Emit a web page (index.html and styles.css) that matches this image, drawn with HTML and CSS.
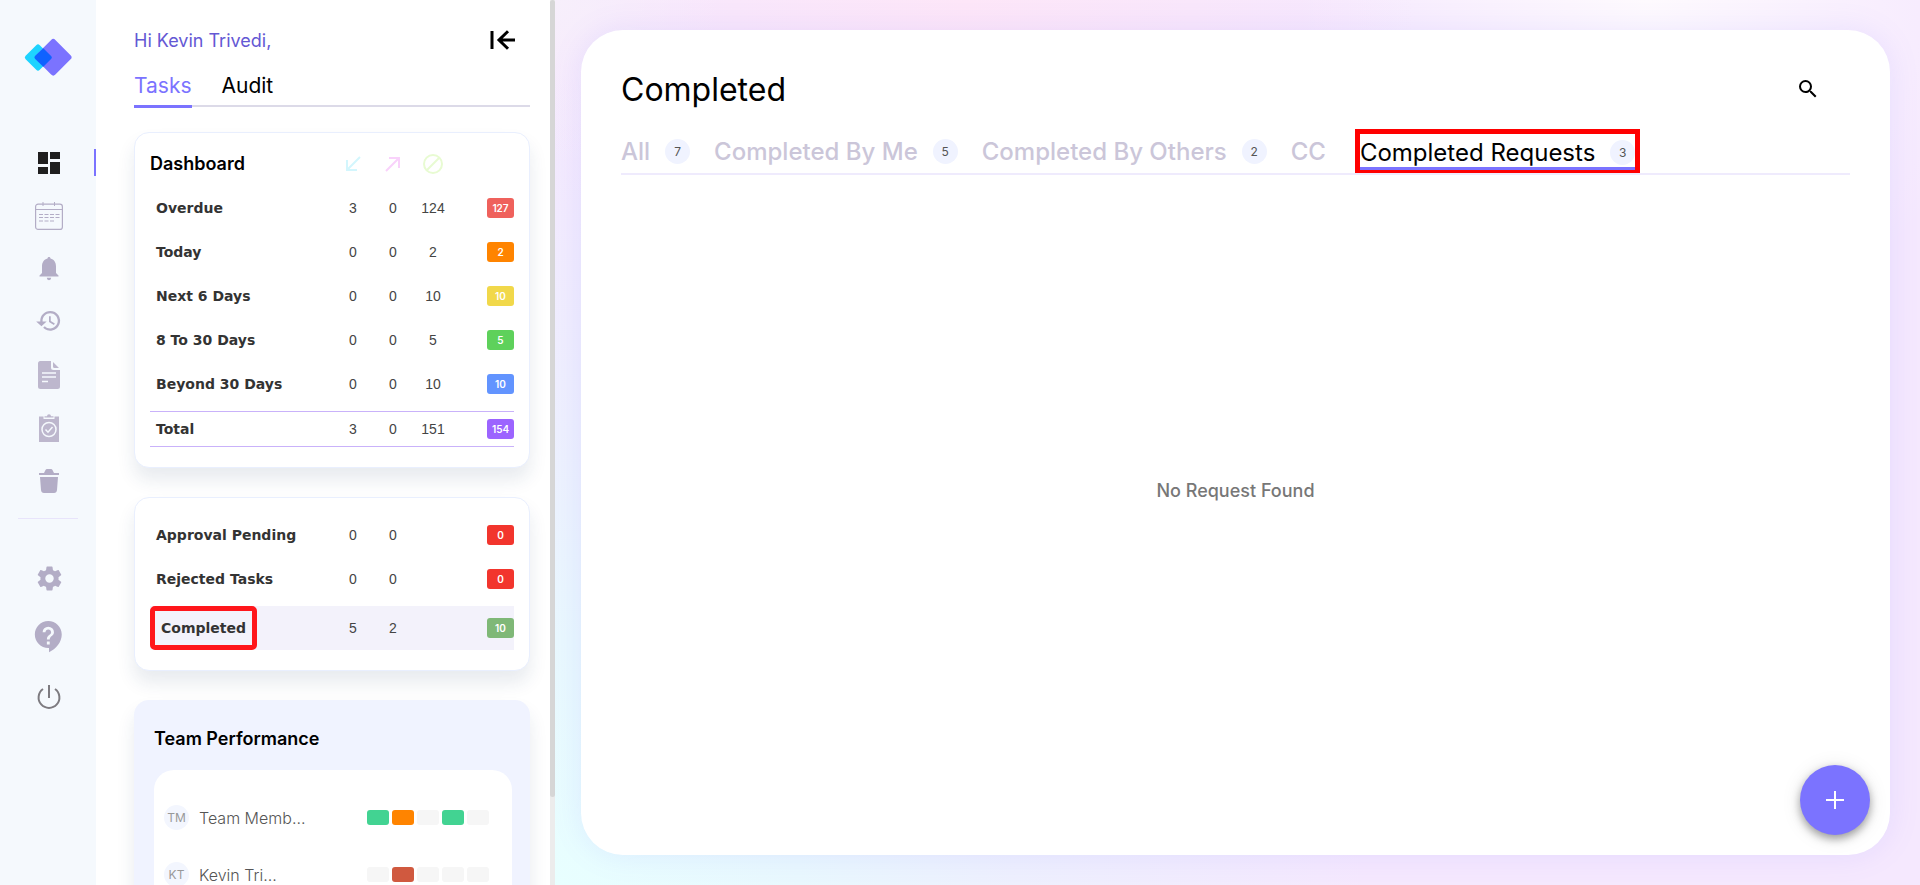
FILE: index.html
```html
<!DOCTYPE html>
<html lang="en">
<head>
<meta charset="utf-8">
<meta name="viewport" content="width=device-width, initial-scale=1">
<title>Completed Requests</title>
<link rel="stylesheet" href="styles.css">
</head>
<body>
<div class="app">
  <nav class="rail" aria-label="Main">
    <a class="logo" href="#" aria-label="Home">
      <svg width="50" height="40" viewBox="0 0 50 40">
        <rect x="5" y="10.500" width="20" height="20" rx="2.500" transform="rotate(45 15 20.500)" fill="#1dd3ff"/>
        <rect x="16.500" y="6.500" width="27.500" height="27.500" rx="3" transform="rotate(45 30.250 20.250)" fill="#7b73ff"/>
        <path d="M20.300 11.300 L28.300 19.200 Q29.500 20.500 28.300 21.800 L20.300 29.700 L12 21.700 Q10.800 20.300 12 19 Z" fill="#0f62ff"/>
      </svg>
    </a>
    <div class="rail-group">
      <button class="rail-btn active" aria-label="Dashboard"><svg width="22" height="22" viewBox="0 0 22 22" fill="#1f1f1f"><path d="M0 0h10v12H0zM0 15h10v7H0zM12 0h10v7H12zM12 10h10v12H12z"/></svg></button>
      <button class="rail-btn" aria-label="Calendar"><svg width="28" height="28" viewBox="0 0 28 28" fill="none" stroke="#b3adc6"><rect x=".6" y="2.200" width="26.800" height="25.200" rx="2.500" stroke-width="1.200"/><path d="M.6 7.500h26.800M8 0v4M19.500 0v4"/><path d="M4 12.500h20.500M4 15.500h20.500M4 19h15.500" stroke-dasharray="4 1.500"/></svg></button>
      <button class="rail-btn" aria-label="Notifications"><svg width="20" height="24" viewBox="0 0 20 24" fill="#b3adc6"><path d="M10 0c.9 0 1.500.7 1.500 1.600C15 2.500 17 5.500 17 9.500v6.500l2.500 2.500v1H.5v-1L3 16V9.500C3 5.500 5 2.500 8.500 1.600 8.500.7 9.100 0 10 0zM7.800 20.800h4.400a2.200 2.400 0 0 1-4.400 0z"/></svg></button>
      <button class="rail-btn" aria-label="History"><svg width="28" height="28" viewBox="0.500 0.500 24 24" fill="#b3adc6"><path d="M13.500 3C8.800 3 5 6.800 5 11.500V12H1.500l4.500 4.200 4.500-4.200H7v-.5C7 7.900 9.900 5 13.500 5s6.500 2.900 6.500 6.500-2.900 6.500-6.500 6.500c-1.800 0-3.400-.7-4.600-1.900l-1.400 1.400A8.500 8.500 0 1 0 13.500 3zM12.500 7.500v5l4.200 2.500.8-1.200-3.500-2.100V7.500z"/></svg></button>
      <button class="rail-btn" aria-label="Documents"><svg width="22" height="28" viewBox="0 0 22 28"><path d="M3 0h10v6.500A2.500 2.500 0 0 0 15.500 9H22v16.500a2.500 2.500 0 0 1-2.500 2.500h-17A2.500 2.500 0 0 1 0 25.500v-23A2.500 2.500 0 0 1 3 0zM15 1l6 6h-4.500A1.500 1.500 0 0 1 15 5.500z" fill="#bdb7cd"/><path d="M4 12h14M4 16h14M4 20.500h6" stroke="#f5f9fd" stroke-width="1.500"/></svg></button>
      <button class="rail-btn" aria-label="Approvals"><svg width="20" height="28" viewBox="0 0 20 28"><path d="M0 2.500h4.500V5h11V2.500H20V28H0z" fill="#bdb7cd"/><path d="M5.500 3.500V2.300H8a2 2 0 0 1 4 0h2.500v1.200z" fill="#bdb7cd"/><circle cx="10" cy="15.500" r="7" fill="none" stroke="#f5f9fd" stroke-width="1.500"/><path d="m6.500 15.500 2.500 2.700 4.500-5.200" fill="none" stroke="#f5f9fd" stroke-width="1.500"/></svg></button>
      <button class="rail-btn" aria-label="Trash"><svg width="20" height="24" viewBox="0 0 20 24" fill="#b3adc6"><path d="M0 4h5l1.500-3Q7 0 8 0h4q1 0 1.500 1L15 4h5v2H0zM1 8h18l-1 13q-.3 3-3 3H5q-2.700 0-3-3z"/></svg></button>
    </div>
    <hr class="rail-rule">
    <div class="rail-group rail-group-low">
      <button class="rail-btn" aria-label="Settings"><svg width="29" height="29" viewBox="0 0 24 24" fill="#b3adc6"><path d="M19.430 12.980c.04-.32.07-.64.07-.98s-.03-.66-.07-.98l2.110-1.650c.19-.15.24-.42.12-.64l-2-3.460c-.12-.22-.39-.3-.61-.22l-2.490 1c-.52-.4-1.080-.73-1.690-.98l-.38-2.650C14.460 2.180 14.250 2 14 2h-4c-.25 0-.46.18-.49.42l-.38 2.650c-.61.25-1.170.59-1.690.98l-2.490-1c-.23-.09-.49 0-.61.22l-2 3.460c-.13.22-.07.49.12.64l2.110 1.650c-.04.32-.07.65-.07.98s.03.66.07.98l-2.110 1.650c-.19.15-.24.42-.12.64l2 3.460c.12.22.39.3.61.22l2.490-1c.52.4 1.080.73 1.690.98l.38 2.650c.03.24.24.42.49.42h4c.25 0 .46-.18.49-.42l.38-2.650c.61-.25 1.170-.59 1.690-.98l2.490 1c.23.09.49 0 .61-.22l2-3.460c.12-.22.07-.49-.12-.64zM12 15.500a3.500 3.500 0 1 1 0-7 3.500 3.500 0 0 1 0 7z"/></svg></button>
      <button class="rail-btn" aria-label="Help"><svg width="34" height="34" viewBox="0 2 24 24" fill="#b3adc6"><path d="M11.500 2C6.260 2 2 6.260 2 11.500S6.260 21 11.500 21h.5v3c4.860-2.340 9-7 9-12.500C21 6.260 16.740 2 11.500 2zm1 16.500h-2v-2h2zm0-3.500h-2c0-3.250 3-3 3-5 0-1.100-.9-2-2-2s-2 .9-2 2h-2a4 4 0 0 1 8 0c0 2.500-3 2.750-3 5z"/></svg></button>
      <button class="rail-btn" aria-label="Log out"><svg width="24" height="24" viewBox="0 0 24 24" fill="none" stroke="#7d7b80" stroke-width="2"><path d="M12 0v13M6 4a10.400 10.400 0 1 0 12 0"/></svg></button>
    </div>
  </nav>

  <aside class="panel">
    <header class="panel-head">
      <p class="greeting">Hi Kevin Trivedi,</p>
      <button class="collapse" aria-label="Collapse panel"><svg width="26" height="20" viewBox="0 0 26 20" fill="none" stroke="#000" stroke-width="3"><path d="M3 1v18M26 10H10M19 1.200 10 10l9 8.800"/></svg></button>
    </header>
    <div class="panel-tabs">
      <button class="panel-tab current">Tasks</button>
      <button class="panel-tab">Audit</button>
    </div>

    <section class="card">
      <table class="stats">
        <thead>
          <tr>
            <th class="stats-title" scope="col">Dashboard</th>
            <th scope="col" aria-label="Incoming"><svg width="16" height="16" viewBox="0 0 16 16" fill="none" stroke="#d3f6fd" stroke-width="2"><path d="M15 1 2 14M2 4v10h10"/></svg></th>
            <th scope="col" aria-label="Outgoing"><svg width="16" height="16" viewBox="0 0 16 16" fill="none" stroke="#f9d2fb" stroke-width="2"><path d="M1 15 14 2M4 2h10v10"/></svg></th>
            <th scope="col" aria-label="Other"><svg width="20" height="20" viewBox="0 0 20 20" fill="none" stroke="#e8fbd2" stroke-width="2"><circle cx="10" cy="10" r="9"/><path d="M4 16 16 4"/></svg></th>
            <td></td>
          </tr>
        </thead>
        <tbody>
          <tr><th scope="row">Overdue</th><td>3</td><td>0</td><td>124</td><td><span class="badge red">127</span></td></tr>
          <tr><th scope="row">Today</th><td>0</td><td>0</td><td>2</td><td><span class="badge orange">2</span></td></tr>
          <tr><th scope="row">Next 6 Days</th><td>0</td><td>0</td><td>10</td><td><span class="badge yellow">10</span></td></tr>
          <tr><th scope="row">8 To 30 Days</th><td>0</td><td>0</td><td>5</td><td><span class="badge green">5</span></td></tr>
          <tr><th scope="row">Beyond 30 Days</th><td>0</td><td>0</td><td>10</td><td><span class="badge blue">10</span></td></tr>
        </tbody>
        <tfoot>
          <tr><th scope="row">Total</th><td>3</td><td>0</td><td>151</td><td><span class="badge purple">154</span></td></tr>
        </tfoot>
      </table>
    </section>

    <section class="card card-short">
      <table class="stats">
        <tbody>
          <tr><th scope="row">Approval Pending</th><td>0</td><td>0</td><td></td><td><span class="badge scarlet">0</span></td></tr>
          <tr><th scope="row">Rejected Tasks</th><td>0</td><td>0</td><td></td><td><span class="badge scarlet">0</span></td></tr>
        </tbody>
        <tbody>
          <tr class="selected"><th scope="row"><span class="marked">Completed</span></th><td>5</td><td>2</td><td></td><td><span class="badge sage">10</span></td></tr>
        </tbody>
      </table>
    </section>

    <section class="team">
      <h2 class="team-title">Team Performance</h2>
      <ul class="team-list">
        <li class="member"><span class="avatar">TM</span><span class="name">Team Memb...</span><span class="bars"><i class="bar up"></i><i class="bar warn"></i><i class="bar"></i><i class="bar up"></i><i class="bar"></i></span></li>
        <li class="member"><span class="avatar">KT</span><span class="name">Kevin Tri...</span><span class="bars"><i class="bar"></i><i class="bar down"></i><i class="bar"></i><i class="bar"></i><i class="bar"></i></span></li>
      </ul>
    </section>
  </aside>
  <div class="track"><div class="thumb"></div></div>

  <main class="stage">
    <section class="sheet">
      <header class="sheet-head">
        <h1 class="title">Completed</h1>
        <button class="search" aria-label="Search"><svg width="24" height="24" viewBox="0 0 24 24"><path d="M15.500 14h-.79l-.28-.27A6.470 6.470 0 0 0 16 9.500 6.500 6.500 0 1 0 9.500 16c1.610 0 3.090-.59 4.230-1.570l.27.28v.79l5 4.990L20.490 19zm-6 0C7.010 14 5 11.990 5 9.500S7.010 5 9.500 5 14 7.010 14 9.500 11.990 14 9.500 14z"/></svg></button>
      </header>
      <div class="tabs">
        <button class="tab">All <span class="count">7</span></button>
        <button class="tab">Completed By Me <span class="count">5</span></button>
        <button class="tab">Completed By Others <span class="count">2</span></button>
        <button class="tab">CC</button>
        <button class="tab chosen">Completed Requests <span class="count">3</span></button>
      </div>
      <p class="empty">No Request Found</p>
      <button class="fab" aria-label="Add"><svg width="18" height="18" viewBox="0 0 18 18" stroke="#fff" stroke-width="2"><path d="M9 0v18M0 9h18"/></svg></button>
    </section>
  </main>
</div>
</body>
</html>
```
FILE: styles.css
```css
* { box-sizing: border-box; }
body, p, h1, h2, ul { margin: 0; padding: 0; }
body { font-family: Inter, "Open Sans", sans-serif; color: #000; background: #fff; }
button { border: 0; padding: 0; background: none; font: inherit; color: inherit; cursor: pointer; }
svg { display: block; }

.app { display: flex; height: 100vh; overflow: hidden; }

.rail { flex: 0 0 96px; background: #f5f9fd; display: flex; flex-direction: column; align-items: center; padding-top: 37px; }
.logo { display: block; height: 40px; }
.rail-group { align-self: stretch; display: flex; flex-direction: column; margin-top: 59px; }
.rail-btn { height: 53px; display: flex; align-items: center; justify-content: center; padding-left: 2px; position: relative; }
.rail-btn.active::after { content: ""; position: absolute; right: 0; top: 13px; width: 2px; height: 27px; background: #7b73ff; }
.rail-rule { width: 60px; height: 1px; border: 0; margin: 11px 0 0; background: #e8e4fb; }
.rail-group-low { margin-top: 30px; }
.rail-group-low .rail-btn { height: 59px; }

.panel { flex: 0 0 454px; padding: 0 20px 0 38px; overflow: hidden; }
.panel-head { display: flex; align-items: center; justify-content: space-between; padding: 26px 15px 0 0; height: 54px; }
.greeting { font-size: 18px; color: #6458d4; }
.panel-tabs { display: flex; gap: 30px; height: 54px; margin-bottom: 24px; box-shadow: inset 0 -1px #fff, inset 0 -3px #dcdae8; }
.panel-tab { padding-top: 12px; font-size: 21px; border-bottom: 3px solid transparent; }
.panel-tab.current { color: #7b73ff; border-color: #7b73ff; }

.card { border: 1px solid #e9effe; border-radius: 15px; padding: 8px 15px 20px; margin-bottom: 29px; background: #fff; box-shadow: 0 12px 18px rgba(30, 60, 100, .1); }
.card-short { padding: 15px; }
.stats { width: 100%; table-layout: fixed; border-collapse: collapse; font-family: "Liberation Sans", Arial, sans-serif; color: #444; }
.stats th, .stats td { height: 44px; padding: 0; font-size: 14px; text-align: center; width: 40px; }
.stats th svg { margin: 0 auto; }
.stats tr > :first-child { width: auto; text-align: left; }
.stats tr > :last-child { width: 61px; text-align: right; }
.stats tbody th, .stats tfoot th { font-family: "DejaVu Sans", Verdana, sans-serif; font-size: 14px; color: #333; padding-left: 6px; }
.stats thead th, .stats thead td { height: 45px; }
.stats th.stats-title { font: 600 18px Inter, sans-serif; color: #000; }
.stats tfoot tr { border: solid #c9b2fa; border-width: 1px 0; }
.stats tfoot th, .stats tfoot td { height: 35px; }
.stats tbody::after { content: ""; display: block; height: 5px; }
.badge { display: inline-flex; align-items: center; justify-content: center; width: 27px; height: 20px; border-radius: 3px; color: #fff; font: 600 10px Inter, sans-serif; vertical-align: middle; }
.red { background: #ef615c; }
.orange { background: #ff8400; }
.yellow { background: #f1d84a; }
.green { background: #5ed15b; }
.blue { background: #6294ff; }
.purple { background: #9c64ff; }
.scarlet { background: #f2352d; }
.sage { background: #7fb877; }
.card-short .selected { background: #f3f2fb; }
.stats .selected th { padding: 0; }
.marked { display: inline-flex; align-items: center; height: 44px; padding: 0 6px; border: 5px solid #ff161b; border-radius: 5px; vertical-align: middle; }

.team { background: #f0f3ff; border-radius: 15px; padding: 28px 18px 0 20px; box-shadow: 0 12px 18px rgba(30, 60, 100, .1); }
.team-title { font-size: 18px; font-weight: 600; line-height: 22px; margin-bottom: 20px; }
.team-list { list-style: none; background: #fff; border-radius: 20px; padding: 19px 23px 19px 10px; }
.member { display: flex; align-items: center; height: 57px; }
.avatar { width: 25px; height: 25px; border-radius: 50%; background: #f3f6fe; color: #999; font-size: 12px; display: flex; align-items: center; justify-content: center; margin-right: 10px; }
.name { flex: 1; font-size: 16px; font-weight: 300; color: #555; }
.bars { display: flex; gap: 3px; }
.bar { width: 22px; height: 15px; border-radius: 3px; background: #f6f6f6; }
.bar.up { background: #42d392; }
.bar.warn { background: #ff8400; }
.bar.down { background: #d0593f; }

.track { flex: 0 0 5px; background: #ececec; }
.thumb { height: 90%; background: #d6d6d6; border-radius: 3px; }

.stage {
  flex: 1; min-width: 0; display: flex; padding: 30px 30px 30px 26px;
  background:
    radial-gradient(circle at 0 100%, #e8ffff 0, #e9f8fe 15%, rgba(236, 242, 254, .8) 28%, rgba(240, 236, 254, 0) 50%),
    radial-gradient(circle at 0 0, #f7effb 0, rgba(247, 239, 251, 0) 10%),
    radial-gradient(circle at 30% 0, #fde6f8 0, rgba(253, 230, 248, 0) 35%),
    radial-gradient(circle at 80% 0, #fefafe 0, rgba(254, 250, 254, 0) 25%),
    #f5e8fe;
}
.sheet { flex: 1; min-width: 0; display: flex; flex-direction: column; position: relative; padding: 40px; background: #fff; border-radius: 42px; box-shadow: 0 0 30px rgba(123, 115, 255, .13); }
.sheet-head { display: flex; align-items: center; justify-content: space-between; padding-right: 30px; height: 38px; }
.title { font-size: 32px; font-weight: 400; }
.tabs { display: flex; gap: 24px; margin-top: 21px; height: 46px; border-bottom: 2px solid #efebfd; }
.tab { display: flex; align-items: center; gap: 15px; white-space: nowrap; font-size: 24px; font-weight: 500; color: #cbc6d9; height: 44px; }
.count { width: 25px; height: 25px; border-radius: 50%; background: #f0f3ff; display: flex; align-items: center; justify-content: center; font-size: 12px; font-weight: 400; color: #555; }
.tab.chosen { color: #000; font-weight: 400; border: solid #f00; border-width: 5px 5px 3px; margin-left: 5px; box-shadow: inset 0 -3px #7b73ff; }
.empty { flex: 1; display: flex; align-items: center; justify-content: center; padding-bottom: 10px; font-size: 18px; font-weight: 500; color: #777; }
.fab { position: absolute; right: 20px; bottom: 20px; width: 70px; height: 70px; border-radius: 50%; background: #7b73ff; display: flex; align-items: center; justify-content: center; box-shadow: 0 4px 8px rgba(0, 0, 0, .35), 0 2px 20px rgba(0, 0, 0, .1); }
```
